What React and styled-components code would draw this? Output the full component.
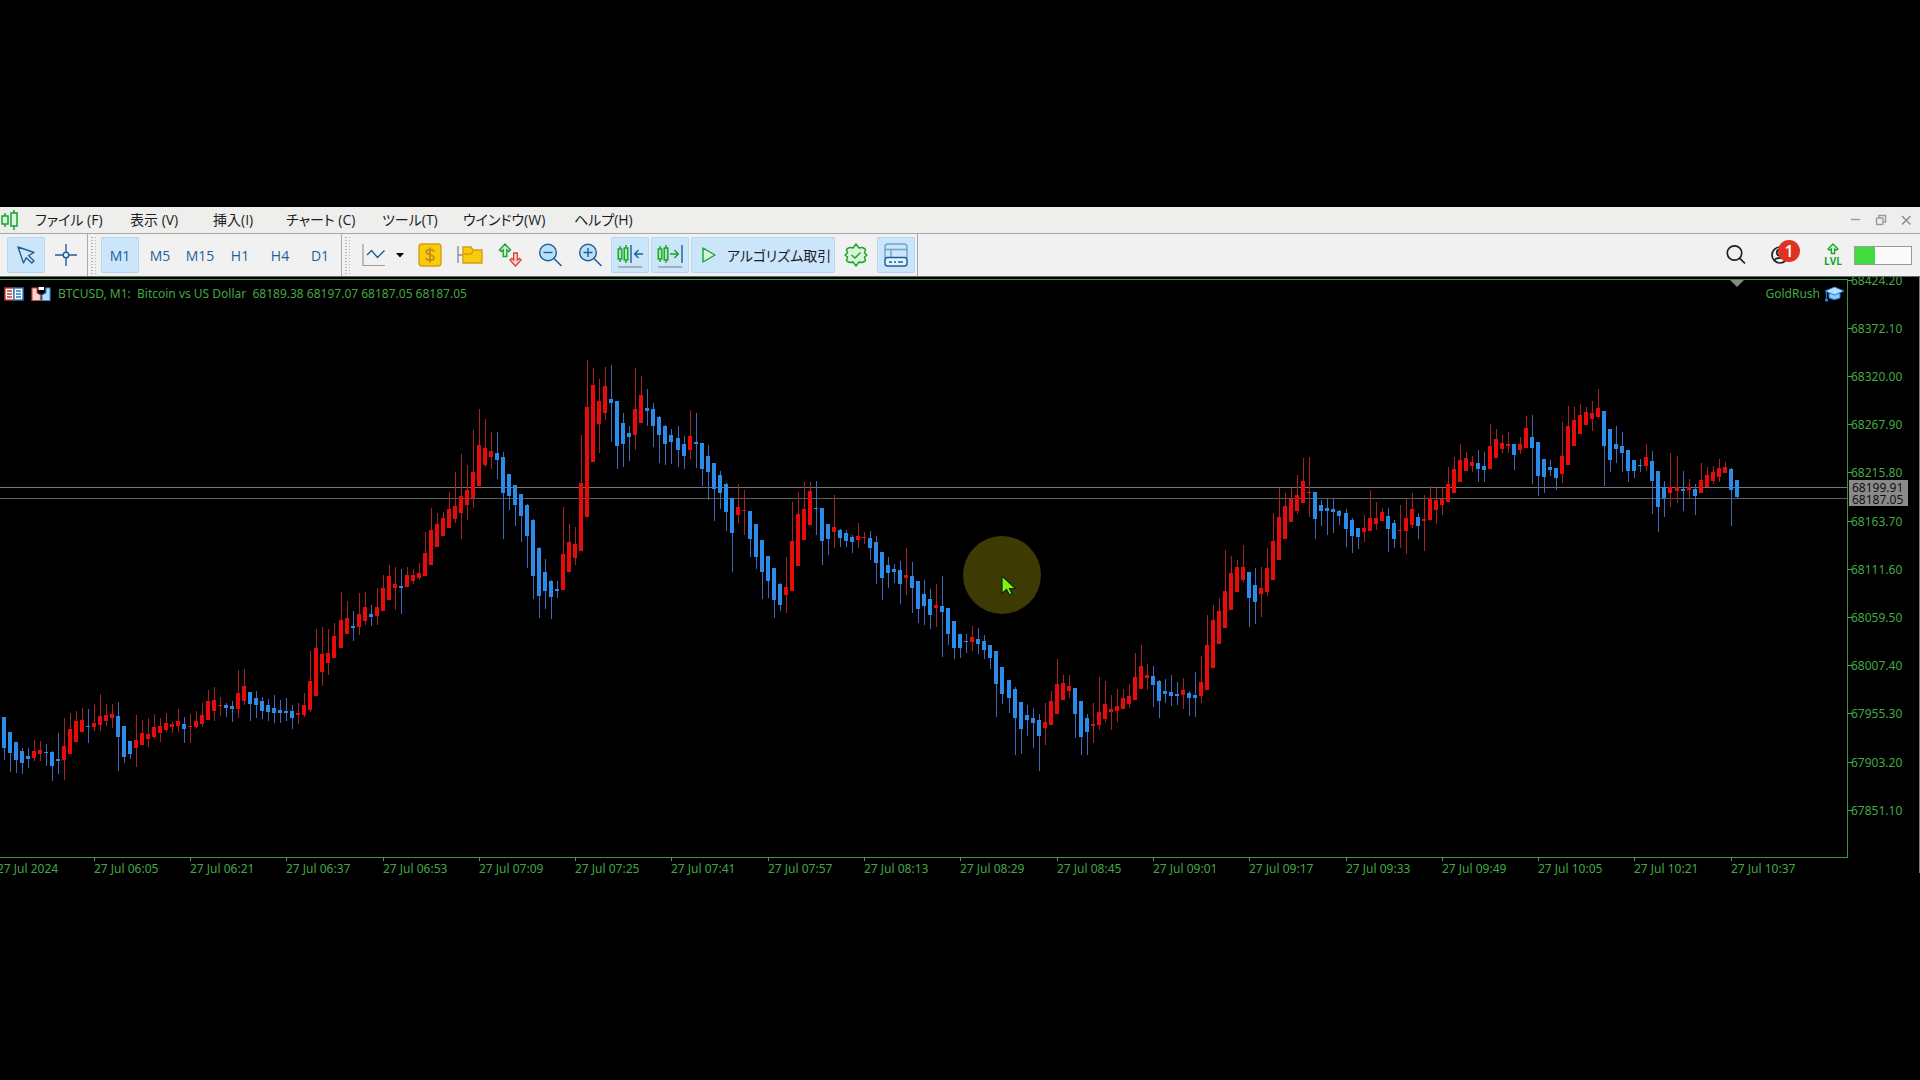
import React from 'react';
import styled, { createGlobalStyle } from 'styled-components';

const GlobalStyle = createGlobalStyle`
  * { box-sizing: border-box; }
  html, body { margin: 0; background: #000; }
  button { font: inherit; color: inherit; border: 0; background: none; padding: 0; cursor: default; }
`;

const UI_FONT = '"Open Sans", "Noto Sans CJK JP", sans-serif';
const CHART_FONT = '"Noto Sans", sans-serif';
const GREEN = '#43a843';
const AXIS = '#3c963c';
const BLUE = '#1f5f99';
const LEAF = '#18a22c';

/* ---------- market data ---------- */

// Each run lists its bars as "colour high top bottom low", in thirds of a pixel below `base`.
const RUNS = [
  { base: 363, bars: `b 232 232 323 360,b 276 276 339 396,b 305 305 360 400,b 323 332 369 402,b 324 348 357 384,r 300 332 354 362,r 304 330 342 362,b 313 336 339 378,b 333 336 378 423,b 280 357 363 402,r 233 318 360 420,r 219 266 342 342,r 213 242 306 306,r 205 240 276 276,b 207 258 261 308,r 192 249 262 273,r 162 228 256 273,r 192 225 243 258,r 192 222 234 264,b 185 228 291 393,b 258 258 351 370,b 303 303 342 356,r 225 300 324 382,r 241 280 315 315,r 234 282 298 322,r 222 261 291 298,r 235 258 279 305,r 219 249 270 276,r 246 253 261 279,r 207 243 258 277,b 231 252 267 309,r 223 258 261 308,r 213 242 261 265,r 190 225 252 261,r 149 183 240 240,r 142 180 213 243,r 170 195 198 227,b 189 195 205 230,b 183 198 208 245,r 90 160 206 235,r 87 138 183 195,b 156 157 192 242,b 153 174 195 235,b 170 183 213 238,b 178 195 216 243,b 165 205 219 249,b 180 210 219 250,b 174 214 219 243,b 195 213 234 266,r 188 219 225 252,r 158 195 225 231,r 33 124 210 216` },
  { base: 123, bars: `r 687 743 888 888,r 681 762 816 857,r 687 758 790 825,r 669 708 774 774,r 576 660 744 744,r 602 654 702 702,b 634 678 684 724,r 580 642 682 705,r 576 621 664 675,b 616 642 651 678,r 564 621 648 675,r 525 564 634 634,r 496 528 600 600,r 501 552 564 630,b 507 558 564 642,r 501 524 562 562,r 508 524 543 553,r 488 519 535 540,r 397 459 528 528,r 324 390 495 495,r 339 373 442 442,r 336 354 408 408,r 276 327 384 384,r 216 318 357 370,r 162 288 339 417,r 196 270 316 361,r 90 216 295 324,r 27 135 259 259,r 58 144 196 202,r 95 153 172 207,b 95 160 180 236,b 156 170 279 417,b 222 223 288 330,b 255 255 315 378,b 282 282 348 426,b 313 314 408 504,b 358 360 528 597,b 441 443 588 654,b 478 515 573 626,b 541 543 592 657,b 543 567 573 594,r 321 462 571 571,r 373 426 517 517,r 380 432 474 496,r 105 248 454 454` },
  { base: 63, bars: `r 60 200 532 532,r 84 134 367 367,r 117 182 252 338,r 81 138 219 241,b 75 178 189 306,b 182 183 318 387,b 220 248 312 380,b 258 279 291 362,r 84 207 286 330,r 108 164 249 249,b 148 204 212 259,b 189 207 258 322,b 229 230 286 368,b 256 257 312 376,b 266 284 306 372,b 257 293 330 381,b 288 312 348 387,r 211 288 330 358,b 220 306 311 384,b 309 309 387 438,b 315 348 396 480,b 369 370 447 542,b 393 405 459 507,b 430 432 516 573,b 474 475 578 696,r 432 501 525 550,r 450 510 514 585,b 512 513 597 651,b 552 553 650 687,b 600 600 695 776,b 648 648 723 774,b 684 685 780 834,b 730 732 795 812,r 651 740 765 818,r 487 602 753 753,r 456 522 679 679,r 426 507 600 600,r 426 453 555 555,b 423 504 507 585,b 504 505 603 675,b 552 553 597 644,r 465 560 576 623,b 568 569 594 620,b 570 579 602 621,b 585 591 606 638,r 550 588 600 624,r 576 591 595 612,b 573 594 623 660,b 587 606 669 731,b 636 636 715 779,b 651 675 699 743,b 672 687 696 728,b 663 690 732 791,r 625 705 713 765` },
  { base: 203, bars: `b 246 288 323 399,b 303 304 386 429,b 300 342 378 434,b 327 358 405 446,r 312 375 384 441,b 288 378 396 530,b 384 385 462 495,b 423 424 504 536,b 462 462 504 534,b 462 483 486 518,r 438 471 486 514,b 444 477 492 521,b 465 483 510 536,b 495 496 534 568,b 513 514 612 712,b 561 562 642 671,b 600 600 654 699,b 621 627 713 825,b 666 667 747 821,b 675 705 720 769,b 684 714 729 805,b 703 720 768 872,r 670 726 744 796,r 633 663 735 735,r 537 613 702 702,r 585 609 659 659,r 586 618 633 654,b 624 625 702 775,b 663 663 771 824,b 702 714 756 824,r 670 732 738 789,r 591 696 735 749,r 603 672 717 725,r 645 687 696 751,r 627 678 693 725,r 627 654 688 688,r 612 648 672 683,r 519 591 661 661,r 496 558 627 627,r 552 585 594 630,b 558 588 615 682,b 600 603 663 714,b 597 632 642 668,b 585 636 648 677,b 606 641 648 675,r 594 630 645 687,b 632 639 654 708,b 577 645 654 710` },
  { base: 163, bars: `r 648 726 769 790,r 525 615 749 749,r 495 540 684 684,r 475 514 613 613,r 331 453 564 564,r 348 399 510 510,r 360 381 456 456,r 315 380 420 425,b 396 397 474 560,b 384 435 486 552,r 381 444 462 531,r 324 384 456 469,r 220 302 420 420,r 144 231 360 360,r 160 198 297 297,r 144 178 247 247,r 105 165 213 221,r 54 123 189 189,r 50 156 159 231,b 156 156 237 297,b 180 195 213 258,b 175 204 213 285,b 178 207 216 279,b 210 213 228 255,b 207 219 267 322,b 234 241 288 339,b 264 264 291 327,r 225 264 276 307,r 150 234 273 273,r 186 234 252 270,r 204 216 243 243,b 204 228 267 335,b 240 249 297 324,r 195 270 273 325,r 178 233 272 343,r 159 207 255 265,b 219 231 258 297,r 166 237 243 333,r 139 175 240 240,r 144 180 210 251,r 144 178 196 225` },
  { base: 93, bars: `r 292 342 396 396,r 261 298 369 369,r 223 270 336 336,r 246 264 304 304,r 258 276 287 305,b 240 279 297 336,b 246 288 300 336,r 162 228 296 296,r 178 207 264 264,r 195 219 237 249,r 186 222 228 249,b 222 223 255 300,r 201 223 240 251,r 139 174 233 233,b 135 201 234 342,b 216 216 318 378,b 266 267 321 368,b 270 291 300 318,b 294 295 325 360,r 156 258 312 340,r 108 168 286 286,r 110 150 228 228,r 102 135 192 192,r 112 126 165 165,r 93 129 147 184,r 56 114 141 148,b 123 124 228 348,b 176 177 269 305,b 168 222 237 278,b 186 228 249 306,b 240 240 303 336,b 270 270 303 324,b 267 285 288 306,r 222 260 289 304,b 243 273 333 432,b 303 303 411 486,b 332 352 384 440,r 249 352 370 411,r 258 352 364 400,b 304 357 363 423,r 327 352 360 384,b 342 357 378 434,r 280 330 369 369,r 292 316 351 351,r 288 306 333 342,r 267 293 321 337,r 277 291 309 309,b 294 297 360 468,b 330 330 381 387` },
];

const BARS = RUNS.flatMap(({ base, bars }) =>
  bars.split(',').map((bar) => {
    const [side, ...levels] = bar.split(' ');
    const [high, top, bottom, low] = levels.map((v) => Math.round(base + Number(v) / 3));
    return { up: side === 'r', high, top, bottom, low };
  })
);

const FIRST_BAR_X = 4;
const BAR_STEP = 6.018;
const barX = (i) => Math.floor(FIRST_BAR_X + i * BAR_STEP);

const PRICES = ['68424.20', '68372.10', '68320.00', '68267.90', '68215.80', '68163.70',
  '68111.60', '68059.50', '68007.40', '67955.30', '67903.20', '67851.10'];
const TIMES = ['27 Jul 2024', '27 Jul 06:05', '27 Jul 06:21', '27 Jul 06:37', '27 Jul 06:53',
  '27 Jul 07:09', '27 Jul 07:25', '27 Jul 07:41', '27 Jul 07:57', '27 Jul 08:13', '27 Jul 08:29',
  '27 Jul 08:45', '27 Jul 09:01', '27 Jul 09:17', '27 Jul 09:33', '27 Jul 09:49', '27 Jul 10:05',
  '27 Jul 10:21', '27 Jul 10:37'];
const ASK = { y: 210, price: '68199.91' };
const BID = { y: 221, price: '68187.05' };

/* ---------- frame ---------- */

const Desktop = styled.div`
  min-height: 100vh;
  display: flex;
  flex-direction: column;
  justify-content: center;
  background: #000;
`;

const Terminal = styled.main`
  display: flex;
  flex-direction: column;
  font-family: ${UI_FONT};
`;

const MenuBar = styled.header`
  display: flex;
  align-items: center;
  justify-content: space-between;
  height: 27px;
  padding-right: 8px;
  background: #eeefed;
  border-bottom: 1px solid #a6a6a6;
`;

const Menu = styled.nav`
  display: flex;
  align-items: center;
  font-size: 14px;
  line-height: 26px;
  color: #1c1c1c;
  font-feature-settings: 'palt';
`;

const Brand = styled.svg`
  width: 20px;
  height: 22px;
  flex: none;
`;

const MenuItem = styled.button`
  padding: 0 0 0 15px;
  white-space: nowrap;
  text-align: left;
  width: ${(p) => p.$width}px;
`;

const WindowButtons = styled.div`
  display: flex;
  gap: 13px;
`;

const WindowButton = styled.button`
  display: flex;
  width: 12px;
  height: 12px;
  svg { width: 12px; height: 12px; }
`;

/* ---------- toolbar ---------- */

const ToolBar = styled.div`
  display: flex;
  justify-content: space-between;
  height: 43px;
  background: #f1f1f1;
  border-bottom: 1px solid #6b6b6b;
`;

const ToolGroups = styled.div`
  display: flex;
`;

const ToolGroup = styled.div`
  display: flex;
  align-items: center;
  gap: 2px;
  padding: 0 2px 0 ${(p) => p.$start}px;
  border-right: 1px solid #aaa;
`;

const Grip = styled.div`
  width: 6px;
  margin: 2px 0 2px 2px;
  background-image: radial-gradient(circle, #b4b4b4 1px, transparent 1px);
  background-size: 4px 3px;
`;

const Tool = styled.button`
  display: flex;
  align-items: center;
  justify-content: center;
  gap: 5px;
  min-width: 38px;
  height: 36px;
  padding: ${(p) => (p.$wide ? '0 4px 0 5px' : '0')};
  border-radius: 2px;
  background: ${(p) => (p.$on ? '#cbe5fa' : 'transparent')};
  box-shadow: ${(p) => (p.$on ? 'inset 0 0 0 1px #b4d8f2' : 'none')};
  font-size: 14px;
  color: ${(p) => (p.$wide ? '#1c1c2c' : BLUE)};
  font-feature-settings: 'palt';
  white-space: nowrap;
  svg { width: 26px; height: 26px; flex: none; }
`;

const ChartTypeTool = styled(Tool)`
  gap: 9px;
  width: 53px;
  svg + svg { width: 10px; height: 6px; }
`;

const StatusTools = styled.div`
  display: flex;
  align-items: center;
  padding-right: 8px;
`;

const StatusButton = styled.button`
  position: relative;
  display: flex;
  align-items: center;
  justify-content: center;
  width: ${(p) => p.$width}px;
  height: 36px;
  svg { width: 26px; height: 26px; }
`;

const Badge = styled.span`
  position: absolute;
  left: 23px;
  top: 3px;
  width: 22px;
  height: 22px;
  border-radius: 50%;
  background: #dc3322;
  color: #fff;
  font-size: 16px;
  font-weight: 600;
  line-height: 22px;
  text-align: center;
`;

const LevelButton = styled.button`
  display: flex;
  flex-direction: column;
  align-items: center;
  width: 42px;
  font-size: 10px;
  font-weight: 700;
  line-height: 12px;
  color: ${LEAF};
  svg { width: 12px; height: 12px; }
`;

const Level = styled.div`
  width: 58px;
  height: 19px;
  border: 1px solid #9a9a9a;
  background: #fafafa;
`;

const LevelFill = styled.div`
  width: 36%;
  height: 100%;
  background: #41dd40;
`;

/* ---------- chart ---------- */

const ChartPanel = styled.section`
  display: grid;
  grid-template-columns: 1fr 72px;
  grid-template-rows: 580px 16px;
  background: #000;
  border-right: 1px solid #7c7c7c;
  font-family: ${CHART_FONT};
  font-size: 12px;
  svg text { font-size: 12px; }
`;

const Plot = styled.div`
  position: relative;
  overflow: hidden;
`;

const Drawing = styled.svg`
  display: block;
  width: 100%;
  height: 100%;
  overflow: ${(p) => (p.$open ? 'visible' : 'hidden')};
  shape-rendering: ${(p) => (p.$crisp ? 'crispEdges' : 'auto')};
`;

const TimeAxis = styled.div`
  grid-column: 1 / -1;
`;

const ChartHeader = styled.div`
  position: absolute;
  inset: 9px 3px auto 4px;
  display: flex;
  justify-content: space-between;
  align-items: center;
  height: 16px;
  line-height: 16px;
  color: ${GREEN};
`;

const HeaderPart = styled.div`
  display: flex;
  align-items: center;
  gap: ${(p) => p.$gap}px;
  white-space: pre;
  svg { width: 20px; height: 16px; }
`;

const Symbol = styled.h1`
  margin: 0;
  font-size: 12px;
  font-weight: 400;
`;

const ShiftMark = styled.div`
  position: absolute;
  top: 3px;
  right: 103px;
  border: 7px solid transparent;
  border-top-color: #8a8a8a;
  border-bottom: 0;
`;

const Spotlight = styled.div`
  position: absolute;
  left: 963px;
  top: 259px;
  width: 78px;
  height: 78px;
  border-radius: 50%;
  background: #3d3a04;
  display: flex;
  align-items: flex-end;
  justify-content: center;
  svg { width: 16px; height: 22px; margin: 0 0 17px 13px; }
`;

/* ---------- icons ---------- */

const Icon = ({ size = 26, children }) => (
  <svg viewBox={`0 0 ${size} ${size}`} fill="none" stroke={BLUE} strokeWidth="1.4" aria-hidden="true">{children}</svg>
);

const PointerIcon = () => (
  <Icon><path d="M5 5 L21 10.5 L15.5 13.5 L21 19 L18.8 21 L13.2 15.7 L10.5 21 Z" fill="#cfe6fa" strokeLinejoin="round" /></Icon>
);
const CrosshairIcon = () => (
  <Icon><path d="M2 13 H10 M16 13 H24 M13 2 V10 M13 16 V24" /><circle cx="13" cy="13" r="2.8" /></Icon>
);
const LineChartIcon = () => (
  <Icon>
    <path d="M3 2 V23.5 H25" stroke="#9b9b9b" strokeWidth="1.2" />
    <path d="M7 13 L11.5 8.5 L17.5 15.5 L24.5 8.5" />
  </Icon>
);
const CaretIcon = () => (
  <svg viewBox="0 0 10 6" aria-hidden="true"><path d="M1 1 H9 L5 5.5 Z" fill="#000" /></svg>
);
const DollarIcon = () => (
  <Icon>
    <rect x="2" y="2" width="22" height="22" rx="3" fill="#f8cb0c" stroke="#dc9d10" />
    <path d="M17 9.5 C16 6.8 9.2 6.8 9.2 10 C9.2 13.2 17 12.2 17 15.8 C17 19 10 19 9 16 M13 5.5 V20.5" stroke="#c98a12" strokeWidth="1.8" />
  </Icon>
);
const FolderIcon = () => (
  <Icon>
    <path d="M1 4 V21 M1 13 H6" stroke="#8d8d8d" />
    <path d="M6 5 H14 L16 8 H25 V21 H6 Z" fill="#f8cb0c" stroke="#d89d14" />
    <path d="M6 12 H14 L16 9" stroke="#d89d14" />
  </Icon>
);
const OrdersIcon = () => (
  <Icon>
    <path d="M8 2 L13.5 8 L11.8 9.5 L9.8 8 V14.5 H6.2 V8 L4.2 9.5 L2.5 8 Z" stroke="#1da133" fill="#c7f0ca" />
    <path d="M18.5 24 L13 18 L14.7 16.5 L16.7 18 V11 H20.3 V18 L22.3 16.5 L24 18 Z" stroke="#d94540" fill="#fbd8d6" />
  </Icon>
);
const ZoomIcon = ({ plus }) => (
  <Icon>
    <circle cx="11" cy="10.5" r="8.3" fill="#b9e0fb" />
    <path d="M17 16.5 L24.5 24" strokeWidth="1.6" />
    <path d={plus ? 'M6.5 10.5 H15.5 M11 6 V15' : 'M6.5 10.5 H15.5'} />
  </Icon>
);
const CandlePair = () => (
  <g stroke={LEAF} fill="#a9eaa2">
    <path d="M3 4 V7 M3 17 V20 M9 3 V6 M9 18 V21" />
    <rect x="1.2" y="7" width="3.6" height="10" /><rect x="7.2" y="6" width="3.6" height="12" />
  </g>
);
const ShiftIcon = () => (
  <Icon>
    <CandlePair />
    <path d="M14 3 V21 M18 12 H26 M21.5 8 L17.6 12 L21.5 16" />
    <path d="M1 25 H25" stroke="#999" />
  </Icon>
);
const AutoScrollIcon = () => (
  <Icon>
    <CandlePair />
    <path d="M13 12 H21 M17.4 8 L21.3 12 L17.4 16" stroke={LEAF} />
    <path d="M25 3 V21" /><path d="M1 25 H25" stroke="#999" />
  </Icon>
);
const PlayIcon = () => (
  <Icon><path d="M7 6 L19 13 L7 20 Z" stroke={LEAF} fill="#d5f5da" strokeLinejoin="round" /></Icon>
);
const GearIcon = () => (
  <Icon>
    <path d="M13 2 L16 6 Q20 4.500 22.500 7.500 L21.500 11 L24 13 L21.500 15 L22.500 18.500 Q20 21.500 16 20 L13 24 L10 20 Q6 21.500 3.500 18.500 L4.500 15 L2 13 L4.500 11 L3.500 7.500 Q6 4.500 10 6 Z" stroke={LEAF} fill="#d8f5dc" strokeLinejoin="round" />
    <path d="M8.500 13 L12 16 L17.500 10.500" stroke={LEAF} />
  </Icon>
);
const TradePanelIcon = () => (
  <Icon>
    <path d="M2 16 V5 Q2 2 5 2 H21 Q24 2 24 5 V16" stroke="#6aa5ce" />
    <path d="M2 7.5 H24 M8 7.5 V16" stroke="#6aa5ce" />
    <rect x="2" y="15.5" width="22" height="8.5" rx="2.5" fill="#e3f2fd" />
    <path d="M6 20 H9 M11 20 H13 M15 20 H20" />
  </Icon>
);
const SearchIcon = () => (
  <Icon><circle cx="11.5" cy="11" r="7.2" stroke="#222" strokeWidth="1.7" /><path d="M16.8 16.3 L22 21.5" stroke="#222" strokeWidth="1.7" /></Icon>
);
const AccountIcon = () => (
  <Icon>
    <g stroke="#222" strokeWidth="1.7">
      <circle cx="9" cy="13" r="8" /><circle cx="9" cy="10.5" r="3.2" /><path d="M3.5 18.5 C5 15 13 15 14.5 18.5" />
    </g>
  </Icon>
);
const LevelIcon = () => (
  <Icon size={12}><path d="M6 1 L11 6 L9.5 7.3 L7.6 6 V10.5 H4.4 V6 L2.5 7.3 L1 6 Z" stroke={LEAF} strokeWidth="1.3" fill="#d8f5dc" /></Icon>
);
const DepthIcon = () => (
  <svg viewBox="0 0 20 16" aria-hidden="true">
    <rect x="1" y="2" width="9" height="12" fill="#fff" stroke="#c33a35" strokeWidth="1.4" />
    <rect x="10" y="2" width="9" height="12" fill="#fff" stroke="#2a78bc" strokeWidth="1.4" />
    <path d="M3 5 H8 M3 8 H8 M3 11 H8" stroke="#c33a35" strokeWidth="1.3" />
    <path d="M12 5 H17 M12 8 H17 M12 11 H17" stroke="#2a78bc" strokeWidth="1.3" />
  </svg>
);
const OneClickIcon = () => (
  <svg viewBox="0 0 20 16" aria-hidden="true">
    <path d="M1 2 H6 V7 L9.500 9 V14.500 H1 Z" fill="#fbd3d0" stroke="#d14b45" strokeWidth="1.2" />
    <path d="M19 2 H15 V7 L11 9 V14.500 H19 Z" fill="#b9defb" stroke="#3c8dd0" strokeWidth="1.2" />
    <path d="M7.500 1 H13 V4 H7.500 Z" fill="#fff" />
  </svg>
);
const GraduateIcon = () => (
  <svg viewBox="0 0 20 16" aria-hidden="true">
    <path d="M5 7 V12 Q10.5 15 16 12 V7 Z" fill="#8ecbff" stroke="#2277cc" />
    <path d="M10.5 1 L20 5 L10.5 9 L1 5 Z" fill="#b9e0ff" stroke="#2277cc" />
    <path d="M2.5 6 V12" stroke="#2277cc" strokeWidth="1.3" /><circle cx="2.5" cy="14" r="1.7" fill="#2a83d8" />
  </svg>
);

/* ---------- chart drawings ---------- */

const Candle = ({ x, bar }) => (
  <>
    <rect x={x} y={bar.high} width="1" height={bar.low - bar.high} fill={bar.up ? '#a32222' : '#4068b4'} />
    <rect x={x - 2} y={bar.top} width="4" height={Math.max(1, bar.bottom - bar.top)} fill={bar.up ? '#e60c0c' : '#2a8be8'} />
  </>
);

const PriceChart = () => (
  <Drawing $crisp role="img" aria-label="BTCUSD M1">
    <rect x="0" y="2" width="100%" height="1" fill={AXIS} />
    <rect x="0" y={ASK.y} width="100%" height="1" fill="#777" />
    <rect x="0" y={BID.y} width="100%" height="1" fill="#5c605c" />
    {BARS.map((bar, i) => <Candle key={i} x={barX(i)} bar={bar} />)}
  </Drawing>
);

const PriceScale = () => (
  <Drawing>
    <rect x="0" y="2" width="1" height="578" fill={AXIS} />
    {PRICES.map((price, i) => {
      const y = Math.floor(3 + i * 48.2);
      return (
        <g key={price} fill={GREEN}>
          <rect x="1" y={y} width="4" height="1" />
          <text x="4" y={y + 5}>{price}</text>
        </g>
      );
    })}
    <rect x="2" y="203" width="59" height="26" fill="#8a8a8a" />
    <text x="5" y={ASK.y + 5} fill="#111">{ASK.price}</text>
    <text x="5" y={BID.y + 6} fill="#111">{BID.price}</text>
  </Drawing>
);

const TimeScale = () => (
  <Drawing $open>
    <rect x="0" y="0" width="1848" height="1" fill={AXIS} />
    {TIMES.map((time, i) => {
      const x = barX(i * 16 - 1);
      return (
        <g key={time} fill={GREEN}>
          <rect x={x} y="0" width="1" height="4" />
          <text x={x} y="16">{time}</text>
        </g>
      );
    })}
  </Drawing>
);

const MENU = [['ファイル (F)', 95], ['表示 (V)', 83], ['挿入(I)', 73], ['チャート (C)', 96],
  ['ツール(T)', 81], ['ウインドウ(W)', 111], ['ヘルプ(H)', 86]];
const FRAMES = ['M1', 'M5', 'M15', 'H1', 'H4', 'D1'];

export default function App() {
  return (
    <Desktop>
      <GlobalStyle />
      <Terminal>
        <MenuBar>
          <Menu>
            <Brand viewBox="0 0 20 22" fill="#d9f5db" stroke={LEAF} strokeWidth="1.5" aria-hidden="true">
              <path d="M5 4 V18 M14 1 V21" /><rect x="2" y="7" width="6" height="8" /><rect x="11" y="4" width="6" height="13" />
            </Brand>
            {MENU.map(([label, width]) => <MenuItem key={label} $width={width}>{label}</MenuItem>)}
          </Menu>
          <WindowButtons>
            <WindowButton aria-label="最小化"><Icon size={12}><path d="M1 5.5 H10" stroke="#999" /></Icon></WindowButton>
            <WindowButton aria-label="元に戻す"><Icon size={12}><rect x="1.5" y="4" width="6.5" height="6.5" rx="1" stroke="#999" /><path d="M4 3.5 V1.5 H10.5 V8 H8.5" stroke="#999" /></Icon></WindowButton>
            <WindowButton aria-label="閉じる"><Icon size={12}><path d="M2 2 L10.5 10.5 M10.5 2 L2 10.5" stroke="#888" /></Icon></WindowButton>
          </WindowButtons>
        </MenuBar>

        <ToolBar>
          <ToolGroups>
            <ToolGroup $start={7}>
              <Tool $on aria-label="カーソル"><PointerIcon /></Tool>
              <Tool aria-label="クロスヘア"><CrosshairIcon /></Tool>
            </ToolGroup>
            <Grip />
            <ToolGroup $start={5}>
              {FRAMES.map((frame) => <Tool key={frame} $on={frame === 'M1'}>{frame}</Tool>)}
            </ToolGroup>
            <Grip />
            <ToolGroup $start={6}>
              <ChartTypeTool aria-label="ラインチャート"><LineChartIcon /><CaretIcon /></ChartTypeTool>
              <Tool aria-label="気配値"><DollarIcon /></Tool>
              <Tool aria-label="ナビゲータ"><FolderIcon /></Tool>
              <Tool aria-label="新規注文"><OrdersIcon /></Tool>
              <Tool aria-label="縮小"><ZoomIcon /></Tool>
              <Tool aria-label="拡大"><ZoomIcon plus /></Tool>
              <Tool $on aria-label="チャートシフト"><ShiftIcon /></Tool>
              <Tool $on aria-label="自動スクロール"><AutoScrollIcon /></Tool>
              <Tool $on $wide><PlayIcon />アルゴリズム取引</Tool>
              <Tool aria-label="設定"><GearIcon /></Tool>
              <Tool $on aria-label="取引パネル"><TradePanelIcon /></Tool>
            </ToolGroup>
          </ToolGroups>
          <StatusTools>
            <StatusButton $width={38} aria-label="検索"><SearchIcon /></StatusButton>
            <StatusButton $width={57} aria-label="アカウント"><AccountIcon /><Badge>1</Badge></StatusButton>
            <LevelButton><LevelIcon />LVL</LevelButton>
            <Level><LevelFill /></Level>
          </StatusTools>
        </ToolBar>

        <ChartPanel>
          <Plot>
            <PriceChart />
            <ShiftMark />
            <ChartHeader>
              <HeaderPart $gap={7}>
                <DepthIcon />
                <OneClickIcon />
                <Symbol>{'BTCUSD, M1:  Bitcoin vs US Dollar  68189.38 68197.07 68187.05 68187.05'}</Symbol>
              </HeaderPart>
              <HeaderPart $gap={4}>GoldRush<GraduateIcon /></HeaderPart>
            </ChartHeader>
            <Spotlight>
              <svg viewBox="0 0 16 22" aria-hidden="true">
                <path d="M1 1 V18.5 L5.5 14.5 L8.5 20 L11 18.8 L8.5 13.5 H14.5 Z" fill="#7df30f" stroke="#0b2a12" strokeWidth="1.2" />
              </svg>
            </Spotlight>
          </Plot>
          <PriceScale />
          <TimeAxis><TimeScale /></TimeAxis>
        </ChartPanel>
      </Terminal>
    </Desktop>
  );
}
